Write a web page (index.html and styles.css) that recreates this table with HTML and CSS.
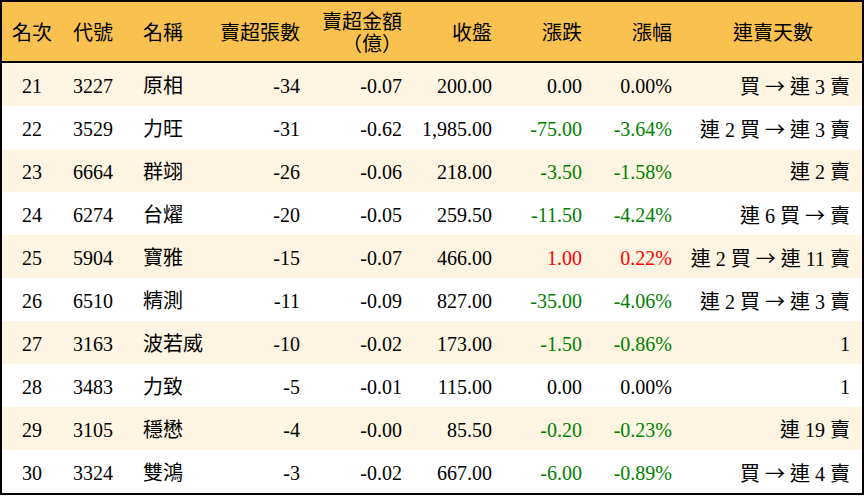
FILE: index.html
```html
<!DOCTYPE html>
<html lang="zh-Hant">
<head>
<meta charset="utf-8">
<link rel="stylesheet" href="styles.css">
</head>
<body>
<table class="rank">
  <colgroup>
    <col class="w1"><col class="w2"><col class="w3"><col class="w4"><col class="w5"><col class="w6"><col class="w7"><col class="w8"><col class="w9">
  </colgroup>
  <thead>
    <tr>
      <th class="c">名次</th>
      <th class="l">代號</th>
      <th class="l">名稱</th>
      <th class="r">賣超張數</th>
      <th class="r two">賣超金額<br>（億）</th>
      <th class="r">收盤</th>
      <th class="r">漲跌</th>
      <th class="r">漲幅</th>
      <th class="c">連賣天數</th>
    </tr>
  </thead>
  <tbody>
    <tr class="odd"><td class="c">21</td><td class="l">3227</td><td class="l">原相</td><td class="r">-34</td><td class="r">-0.07</td><td class="r">200.00</td><td class="r">0.00</td><td class="r">0.00%</td><td class="r">買 <span class="ar">→</span> 連 3 賣</td></tr>
    <tr><td class="c">22</td><td class="l">3529</td><td class="l">力旺</td><td class="r">-31</td><td class="r">-0.62</td><td class="r">1,985.00</td><td class="r dn">-75.00</td><td class="r dn">-3.64%</td><td class="r">連 2 買 <span class="ar">→</span> 連 3 賣</td></tr>
    <tr class="odd"><td class="c">23</td><td class="l">6664</td><td class="l">群翊</td><td class="r">-26</td><td class="r">-0.06</td><td class="r">218.00</td><td class="r dn">-3.50</td><td class="r dn">-1.58%</td><td class="r">連 2 賣</td></tr>
    <tr><td class="c">24</td><td class="l">6274</td><td class="l">台燿</td><td class="r">-20</td><td class="r">-0.05</td><td class="r">259.50</td><td class="r dn">-11.50</td><td class="r dn">-4.24%</td><td class="r">連 6 買 <span class="ar">→</span> 賣</td></tr>
    <tr class="odd"><td class="c">25</td><td class="l">5904</td><td class="l">寶雅</td><td class="r">-15</td><td class="r">-0.07</td><td class="r">466.00</td><td class="r up">1.00</td><td class="r up">0.22%</td><td class="r">連 2 買 <span class="ar">→</span> 連 11 賣</td></tr>
    <tr><td class="c">26</td><td class="l">6510</td><td class="l">精測</td><td class="r">-11</td><td class="r">-0.09</td><td class="r">827.00</td><td class="r dn">-35.00</td><td class="r dn">-4.06%</td><td class="r">連 2 買 <span class="ar">→</span> 連 3 賣</td></tr>
    <tr class="odd"><td class="c">27</td><td class="l">3163</td><td class="l">波若威</td><td class="r">-10</td><td class="r">-0.02</td><td class="r">173.00</td><td class="r dn">-1.50</td><td class="r dn">-0.86%</td><td class="r">1</td></tr>
    <tr><td class="c">28</td><td class="l">3483</td><td class="l">力致</td><td class="r">-5</td><td class="r">-0.01</td><td class="r">115.00</td><td class="r">0.00</td><td class="r">0.00%</td><td class="r">1</td></tr>
    <tr class="odd"><td class="c">29</td><td class="l">3105</td><td class="l">穩懋</td><td class="r">-4</td><td class="r">-0.00</td><td class="r">85.50</td><td class="r dn">-0.20</td><td class="r dn">-0.23%</td><td class="r">連 19 賣</td></tr>
    <tr><td class="c">30</td><td class="l">3324</td><td class="l">雙鴻</td><td class="r">-3</td><td class="r">-0.02</td><td class="r">667.00</td><td class="r dn">-6.00</td><td class="r dn">-0.89%</td><td class="r">買 <span class="ar">→</span> 連 4 賣</td></tr>
  </tbody>
</table>
</body>
</html>
```
FILE: styles.css
```css
html, body {
  margin: 0;
  padding: 0;
  background: #ffffff;
}
.rank {
  width: 864px;
  border-collapse: separate;
  border-spacing: 0;
  table-layout: fixed;
  border: 2px solid #000;
  font-family: "Liberation Serif", "Noto Sans CJK TC", serif;
  font-size: 20px;
  color: #000;
}
.w1 { width: 60px; }
.w2 { width: 70px; }
.w3 { width: 80px; }
.w4 { width: 100px; }
.w5 { width: 102px; }
.w6 { width: 90px; }
.w7 { width: 90px; }
.w8 { width: 90px; }
.w9 { width: 178px; }
.rank thead tr {
  background: #f9c14f;
}
.rank th {
  font-weight: normal;
  padding: 0;
  height: 59px;
  line-height: 22px;
  border-bottom: 2px solid #000;
  padding-top: 2px;
  box-sizing: border-box;
  height: 61px;
}
.rank tbody tr {
  background: #ffffff;
}
.rank tbody tr.odd {
  background: #fdf4e1;
}
.rank td {
  padding: 0;
  height: 43px;
  padding-top: 3px;
  box-sizing: border-box;
  line-height: 24px;
  white-space: nowrap;
}
.c { text-align: center; }
.l { text-align: left; padding-left: 11px !important; }
.r { text-align: right; padding-right: 12px !important; }
.dn { color: #008000; }
.up { color: #ff0000; }
.ar { font-family: "Noto Sans CJK TC", sans-serif; }
```
